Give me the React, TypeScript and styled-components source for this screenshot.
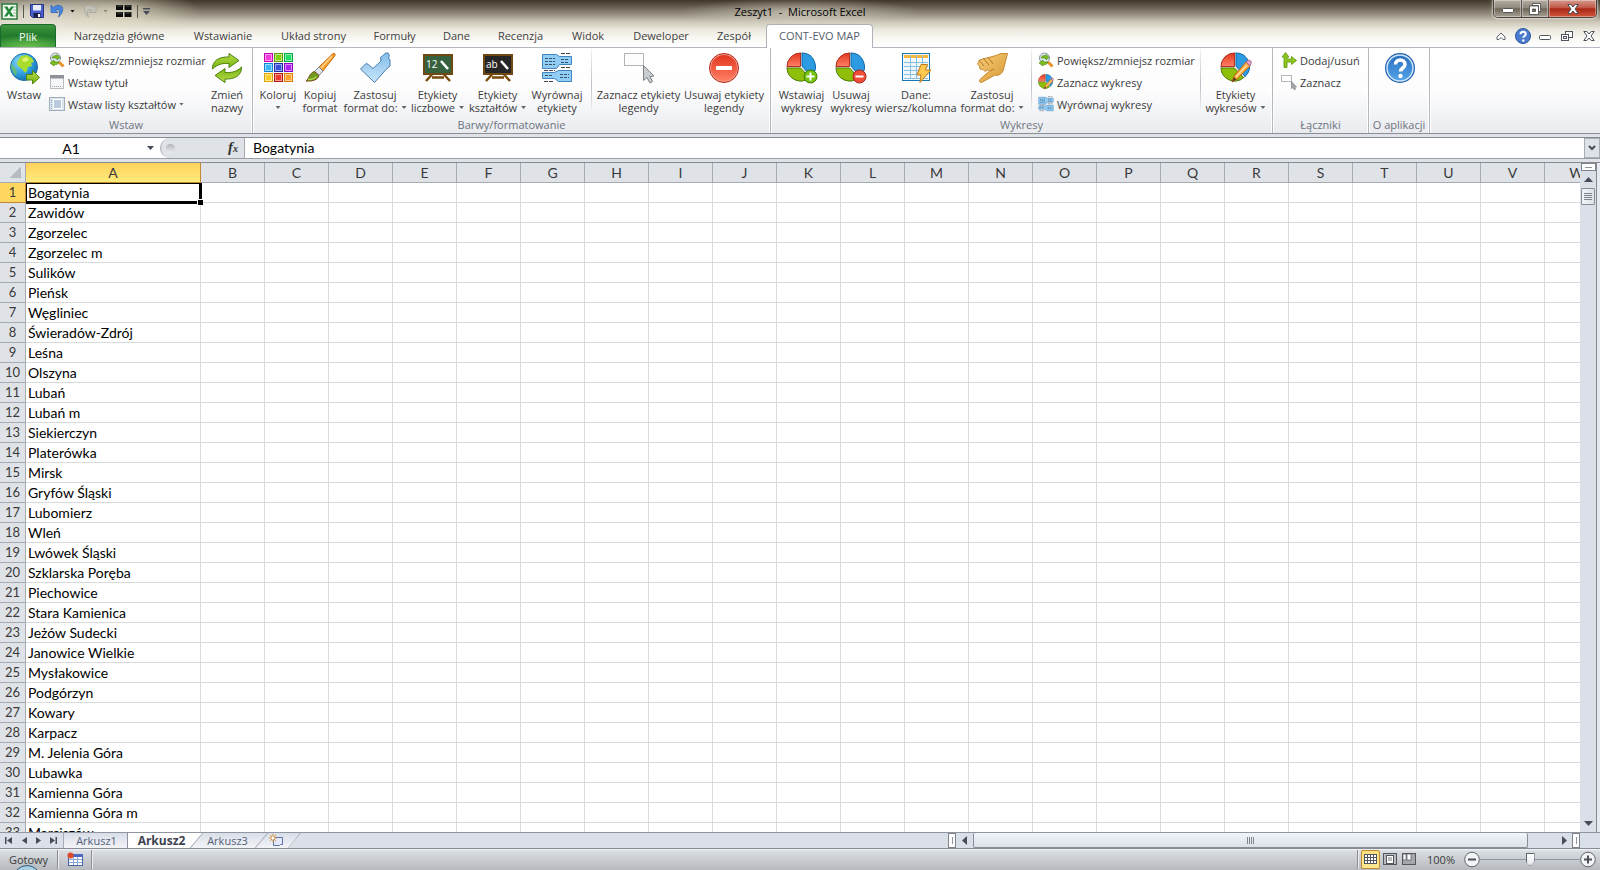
import React from 'react';
import styled, { createGlobalStyle, css } from 'styled-components';

const UI = '"Open Sans", "Noto Sans", sans-serif';
const CELL = 'Lato, "Open Sans", sans-serif';

const GlobalStyle = createGlobalStyle`
  *, *::before, *::after { box-sizing: border-box; }
  body { margin: 0; font-family: ${UI}; font-size: 11px; color: #3b3b3b; overflow: hidden; }
  button, input { font: inherit; color: inherit; margin: 0; padding: 0; border: 0; background: none; }
  svg { display: block; flex: none; }
`;

/* ---------- frame ---------- */

const Window = styled.div`
  display: flex;
  flex-direction: column;
  height: 100vh;
  background: #dfe3e9;
`;

const Glass = styled.header`
  flex: none;
  background:
    radial-gradient(ellipse 80px 24px at 120px 12px, rgba(236, 230, 208, 0.7), rgba(236, 230, 208, 0)),
    radial-gradient(ellipse 120px 34px at 30px 14px, rgba(240, 236, 222, 0.8), rgba(240, 236, 222, 0)),
    radial-gradient(ellipse 120px 14px at 50% 12px, rgba(225, 221, 208, 0.6), rgba(225, 221, 208, 0)),
    linear-gradient(#40382b 0, #5b5345 5px, #8d8677 13px, #cdc8b9 22px, #ece9df 30px, #f8f7f2 38px, #ffffff 47px);
`;

const TitleBar = styled.div`
  display: grid;
  grid-template-columns: 1fr auto 1fr;
  height: 24px;
`;

const QuickAccess = styled.div`
  display: flex;
  align-items: center;
  gap: 5px;
  padding-left: 1px;
  height: 22px;
`;

const IconButton = styled.button`
  display: flex;
  align-items: center;
  justify-content: center;
`;

const MenuIconButton = styled(IconButton)`
  gap: 6px;
  padding-right: 3px;
`;

const BarDivider = styled.span`
  width: 1px;
  height: 13px;
  background: #5b5850;
`;

const Title = styled.h1`
  margin: 0;
  font-size: 11px;
  font-weight: 400;
  line-height: 24px;
  color: #000;
  white-space: pre;
`;

const WindowButtons = styled.div`
  display: flex;
  justify-self: end;
  height: 18px;
  margin-right: 3px;
  border: 1px solid #4b423b;
  border-top: 0;
  border-radius: 0 0 5px 5px;
  overflow: hidden;
  box-shadow: 0 0 2px 1px rgba(255, 255, 255, 0.6);
`;

const WindowButton = styled.button<{ $w: number; $close?: boolean }>`
  display: flex;
  align-items: center;
  justify-content: center;
  width: ${(p) => p.$w}px;
  border-right: 1px solid #5d554d;
  box-shadow: inset 0 0 0 1px rgba(255, 255, 255, 0.35);
  background: linear-gradient(#b5aea3, #8f887c 45%, #6d6558 52%, #a8a297);
  ${(p) => p.$close && css`
    border-right: 0;
    background: linear-gradient(#d49a8c, #c25847 45%, #a82615 52%, #d2583b);
  `}
`;

const TabRow = styled.nav`
  display: flex;
  align-items: stretch;
  height: 24px;
  border-bottom: 1px solid #b4b8be;
`;

const FileTab = styled.button`
  width: 56px;
  margin-right: 3px;
  border: 1px solid #1d6b2c;
  border-bottom: 0;
  border-radius: 4px 4px 0 0;
  color: #fff;
  background: radial-gradient(ellipse 40px 12px at 50% 100%, #6dc04d, rgba(80, 170, 60, 0)), linear-gradient(#41963f, #217a2c 50%, #2f9238);
`;

const RibbonTab = styled.button<{ $w: number; $active?: boolean }>`
  width: ${(p) => p.$w}px;
  white-space: nowrap;
  color: #3f3f3f;
  ${(p) => p.$active && css`
    height: 24px;
    margin-left: 1px;
    padding-bottom: 2px;
    color: #565f6d;
    background: #fff;
    border: 1px solid #aeb2b8;
    border-bottom: 0;
    border-radius: 4px 4px 0 0;
  `}
`;

const TabTools = styled.div`
  display: flex;
  align-items: center;
  margin-left: auto;
`;

const ToolButton = styled(IconButton)`
  width: 22px;
  height: 24px;
`;

/* ---------- ribbon ---------- */

const Ribbon = styled.div`
  flex: none;
  display: flex;
  height: 86px;
  border-bottom: 1px solid #8b9097;
  background: linear-gradient(#ffffff, #fdfdfe 50%, #e9ebef);
`;

const Group = styled.section<{ $w: number }>`
  display: flex;
  flex-direction: column;
  flex: none;
  width: ${(p) => p.$w}px;
  border-right: 1px solid #b3b7be;
  box-shadow: inset -1px 0 #fff, 1px 0 #fff;
`;

const GroupBody = styled.div`
  display: flex;
  height: 70px;
  padding: 1px 2px 0;
`;

const GroupLabel = styled.h2`
  margin: 0;
  font-size: 11px;
  font-weight: 400;
  line-height: 14px;
  text-align: center;
  white-space: nowrap;
  color: #6d7480;
`;

const BigButton = styled.button<{ $w: number }>`
  display: flex;
  flex-direction: column;
  align-items: center;
  flex: none;
  width: ${(p) => p.$w}px;
  height: 66px;
  padding-top: 3px;
  line-height: 13px;
  white-space: nowrap;
`;

const BigCaption = styled.span`
  display: flex;
  align-items: center;
  gap: 4px;
  height: 13px;
  &:first-of-type { margin-top: 4px; }
`;

const SmallColumn = styled.div<{ $w: number; $pad: number }>`
  display: flex;
  flex-direction: column;
  flex: none;
  width: ${(p) => p.$w}px;
  padding-left: ${(p) => p.$pad}px;
`;

const SmallButton = styled.button`
  display: flex;
  align-items: center;
  gap: 3px;
  height: 22px;
  white-space: nowrap;
`;

const Separator = styled.span<{ $w: number }>`
  flex: none;
  width: ${(p) => p.$w}px;
  height: 62px;
  background: linear-gradient(#f2f3f5, #b9bdc6 60%, #f2f3f5) center / 1px 100% no-repeat;
`;

const Gap = styled.span`
  flex: none;
  width: 2px;
`;

const Caret = styled.i<{ $color?: string }>`
  flex: none;
  width: 5px;
  height: 3px;
  background: ${(p) => p.$color || '#63666b'};
  clip-path: polygon(0 0, 100% 0, 50% 100%);
`;

/* ---------- formula bar ---------- */

const FormulaBar = styled.div`
  flex: none;
  display: flex;
  height: 22px;
  margin-top: 3px;
  border-top: 1px solid #868b92;
  border-bottom: 1px solid #9a9fa6;
  background: #fff;
  font-family: ${CELL};
  color: #000;
`;

const NameBox = styled.label`
  display: flex;
  align-items: center;
  width: 160px;
  padding-right: 6px;
  input { width: 100%; min-width: 0; padding-right: 5px; text-align: center; font-size: 14px; outline: 0; }
`;

const FormulaTools = styled.div`
  display: flex;
  align-items: center;
  justify-content: space-between;
  width: 85px;
  padding: 0 6px 0 5px;
  border: 1px solid #a9adb3;
  border-width: 0 1px 0 1px;
  border-radius: 10px 0 0 10px;
  background: #dfe3e8;
`;

const Knob = styled.span`
  width: 9px;
  height: 9px;
  border-radius: 50%;
  background: linear-gradient(#b0b4ba, #eceef1);
`;

const FxButton = styled.button`
  font: italic bold 15px/16px "Liberation Serif", serif;
  color: #333;
  small { font-size: 10px; }
`;

const FormulaInput = styled.input`
  && {
    flex: 1;
    min-width: 0;
    padding: 0 0 1px 8px;
    font-size: 14px;
    outline: 0;
  }
`;

const ExpandButton = styled(IconButton)`
  width: 16px;
  border: 1px solid #a9adb3;
  background: #dfe3e8;
`;

/* ---------- grid ---------- */

const Sheet = styled.main`
  flex: 1;
  display: flex;
  min-height: 0;
  margin-top: 3px;
  border-top: 1px solid #868b92;
`;

const GridView = styled.div`
  flex: 1;
  min-width: 0;
  overflow: hidden;
  background: #fff;
`;

const Grid = styled.table`
  table-layout: fixed;
  width: 1609px;
  border-collapse: separate;
  border-spacing: 0;
  font-family: ${CELL};
  font-size: 14px;
  line-height: 19px;
  color: #000;
`;

const HeadCell = styled.th<{ $on?: boolean }>`
  height: 20px;
  padding: 0;
  font-weight: 400;
  color: #3a3a3a;
  border-right: 1px solid #a6abb1;
  border-bottom: 1px solid #a6abb1;
  background: #dfe3e8;
  ${(p) => p.$on && css`
    border-color: #c08a35;
    background: linear-gradient(#ffd05c, #ffec7c);
  `}
`;

const RowHead = styled(HeadCell)`
  font-size: 13px;
  ${(p) => p.$on && css`background: #ffd65f;`}
`;

const Corner = styled(HeadCell)`
  background: linear-gradient(135deg, transparent 50%, #b6bbc1 50%) 10px 4px / 11px 11px no-repeat, #dfe3e8;
`;

const Cell = styled.td<{ $on?: boolean }>`
  height: 20px;
  padding: 0 0 0 2px;
  border-right: 1px solid #d9dadb;
  border-bottom: 1px solid #d9dadb;
  white-space: nowrap;
  ${(p) => p.$on && css`
    position: relative;
    &::before {
      content: '';
      position: absolute;
      inset: 0 -2px -2px 0;
      border: solid #000;
      border-width: 1px 3px 3px 1px;
    }
    &::after {
      content: '';
      position: absolute;
      right: -3px;
      bottom: -3px;
      width: 6px;
      height: 6px;
      background: #000;
      border: solid #fff;
      border-width: 1px 0 0 1px;
    }
  `}
`;

const VScroll = styled.div`
  flex: none;
  display: flex;
  flex-direction: column;
  align-items: center;
  width: 16px;
  background: #dbe0e8;
`;

const EdgeStrip = styled.div`
  flex: none;
  width: 4px;
  border-left: 1px solid #868b92;
  background: #e6e9f0;
`;

const SplitBox = styled.span<{ $vertical?: boolean }>`
  flex: none;
  width: ${(p) => (p.$vertical ? 8 : 15)}px;
  height: ${(p) => (p.$vertical ? 15 : 8)}px;
  border: 1px solid #7f848b;
  background: linear-gradient(#8f949b, #8f949b) center / ${(p) => (p.$vertical ? '1px 7px' : '7px 1px')} no-repeat, #fff;
`;

const ArrowButton = styled(IconButton)<{ $w: number; $h: number }>`
  flex: none;
  width: ${(p) => p.$w}px;
  height: ${(p) => p.$h}px;
`;

const VThumb = styled.div`
  flex: none;
  width: 14px;
  height: 17px;
  border: 1px solid #868d98;
  border-radius: 1px;
  background: repeating-linear-gradient(#7f858e 0 1px, transparent 1px 2px) center / 8px 8px no-repeat, linear-gradient(90deg, #f3f5f8, #dde1e8);
`;

const Spacer = styled.span`
  flex: 1;
`;

/* ---------- bottom bars ---------- */

const BottomRow = styled.div`
  flex: none;
  display: flex;
  height: 17px;
  border-top: 1px solid #8f96a1;
  border-bottom: 1px solid #868d98;
  background: #dbe0e8;
`;

const SheetNav = styled.div`
  display: flex;
  align-items: center;
  width: 63px;
`;

const SheetTab = styled.button<{ $w: number; $kind?: 'first' | 'active' | 'slanted' }>`
  position: relative;
  width: ${(p) => p.$w}px;
  height: 15px;
  line-height: 15px;
  color: #56617a;
  background: linear-gradient(#d9dee7, #f2f4f8);
  ${(p) => p.$kind === 'first' && css`
    border-left: 1px solid #a6adb8;
    border-right: 1px solid #8b93a0;
    padding-left: 2px;
  `}
  ${(p) => p.$kind === 'active' && css`
    font-size: 12px !important;
    font-weight: 700 !important;
    color: #3d4350;
    background: #fff;
    padding-right: 8px;
    clip-path: polygon(0 0, 100% 0, calc(100% - 13px) 100%, 0 100%);
  `}
  ${(p) => p.$kind === 'slanted' && css`
    margin-left: -13px;
    padding-right: 3px;
    clip-path: polygon(13px 0, 100% 0, calc(100% - 13px) 100%, 0 100%);
    &::before {
      content: '';
      position: absolute;
      left: 6px;
      top: 0;
      width: 1px;
      height: 15px;
      background: #8b93a0;
      transform: skewX(-40deg);
    }
  `}
  &::after {
    content: '';
    position: absolute;
    display: ${(p) => (p.$kind === 'first' ? 'none' : 'block')};
    right: 6px;
    top: 0;
    width: 1px;
    height: 15px;
    background: #8b93a0;
    transform: skewX(-40deg);
  }
  svg { margin: 0 auto; }
`;

const HScroll = styled.div`
  display: flex;
  align-items: center;
  width: 632px;
  margin: 0 20px 0 auto;
`;

const HThumb = styled.div`
  flex: 1;
  height: 15px;
  margin-right: 28px;
  border: 1px solid #868d98;
  border-top: 0;
  border-radius: 2px;
  background: repeating-linear-gradient(90deg, #7f858e 0 1px, transparent 1px 2px) center / 7px 7px no-repeat, linear-gradient(#f1f4f9, #dde1e8);
`;

const StatusBar = styled.footer`
  flex: none;
  display: flex;
  align-items: center;
  height: 21px;
  padding-right: 4px;
  position: relative;
  overflow: hidden;
  background: linear-gradient(#f4f5f8 0, #d9dce1 2px, #b6babe);
`;

const StatusDivider = styled.span`
  width: 2px;
  height: 19px;
  border-left: 1px solid #8b8f95;
  background: #eceef1;
`;

const StatusText = styled.span<{ $w: number }>`
  width: ${(p) => p.$w}px;
  text-align: center;
`;

const Orb = styled.span`
  position: absolute;
  left: 13px;
  top: 16px;
  width: 28px;
  height: 28px;
  border: 1px solid #2c5d78;
  border-radius: 50%;
  background: #a9cfe2;
`;

const ViewButtons = styled.div`
  display: flex;
  padding-left: 2px;
`;

const ViewButton = styled(IconButton)<{ $on?: boolean }>`
  width: 19px;
  height: 19px;
  ${(p) => p.$on && css`
    border: 1px solid #c28c30;
    border-radius: 2px;
    background: linear-gradient(#ffdf7d, #ffe894);
  `}
`;

const ZoomRange = styled.input`
  appearance: none;
  width: 100px;
  height: 17px;
  background: linear-gradient(#8b97a5, #8b97a5) center / 100% 1px no-repeat;
  &::-webkit-slider-thumb {
    appearance: none;
    width: 9px;
    height: 13px;
    background: linear-gradient(#fff, #e3e6ea) center / 7px 11px no-repeat, #5f656d;
    clip-path: polygon(0 0, 100% 0, 100% 65%, 50% 100%, 0 65%);
  }
`;

/* ---------- icons ---------- */

const HiddenSvg = styled.svg`
  position: absolute;
  width: 0;
  height: 0;
`;

const Defs = () => (
  <HiddenSvg aria-hidden="true">
    <defs>
      <linearGradient id="green" x1="0" y1="0" x2="0" y2="1"><stop offset="0" stopColor="#b9dc4a" /><stop offset="1" stopColor="#74b30f" /></linearGradient>
      <linearGradient id="red" x1="0" y1="0" x2="0" y2="1"><stop offset="0" stopColor="#e2361e" /><stop offset="1" stopColor="#ff8065" /></linearGradient>
      <linearGradient id="blue" x1="0" y1="0" x2="0" y2="1"><stop offset="0" stopColor="#2a6fc0" /><stop offset="1" stopColor="#54a5e8" /></linearGradient>
      <linearGradient id="sky" x1="0" y1="0" x2="0" y2="1"><stop offset="0" stopColor="#84bdea" /><stop offset="1" stopColor="#c9e6fa" /></linearGradient>
      <linearGradient id="hand" x1="0" y1="0" x2="1" y2="1"><stop offset="0" stopColor="#f6cf7e" /><stop offset="1" stopColor="#d9962f" /></linearGradient>
      <radialGradient id="globe" cx=".35" cy=".3" r=".8"><stop offset="0" stopColor="#8fd9fb" /><stop offset=".55" stopColor="#2f9fe0" /><stop offset="1" stopColor="#14639f" /></radialGradient>
    </defs>
  </HiddenSvg>
);

type IconProps = { size?: number; children?: React.ReactNode };
const I32 = ({ size = 32, children }: IconProps) => (
  <svg width={size} height={size} viewBox="0 0 32 32" aria-hidden="true">{children}</svg>
);

const GlobeIcon = () => (
  <I32>
    <circle cx="16" cy="15" r="13.5" fill="url(#globe)" stroke="#1d6fa5" />
    <path d="M13 4l6-1 5 3 2 4-3 1 1 3-4 1-1 4-2 2-3-4-4-3-1-4z" fill="#a9dd2f" />
    <path d="M15 6l4-1 2 3-4 2-3-1z" fill="#dff36c" />
    <path d="M3 12l4 3 2 5-1 4c-3-2-5-7-5-12z" fill="#7ac943" opacity=".6" />
    <path d="M18.500 22.500h6v-4l7 7-7 6.500v-4h-6z" fill="url(#green)" stroke="#4f860c" />
  </I32>
);

const SwapIcon = () => {
  const arrow = 'M1.500 17C1 9 8 4.500 18 5V1.500L28 8.500 18 15.500V11.500C11 11 6 12.500 1.500 17z';
  return (
    <I32>
      <path d={arrow} fill="url(#green)" stroke="#4c820c" />
      <path d={arrow} fill="url(#green)" stroke="#4c820c" transform="rotate(180 16 16)" />
    </I32>
  );
};

const PALETTE = [
  ['#f53bdc', '#c800b4'], ['#84cf0c', '#5d9e00'], ['#21dd68', '#00a845'],
  ['#3cb7fb', '#1287d6'], ['#3a4fdc', '#1f2fa6'], ['#b022f2', '#8500c4'],
  ['#ffcf2b', '#d9a300'], ['#ea3b30', '#b51a10'], ['#ffa12b', '#dd7a00'],
];
const ColorsIcon = () => (
  <I32>
    {PALETTE.map(([fill, stroke], i) => {
      const x = 2 + (i % 3) * 10 + 0.5;
      const y = 1 + Math.floor(i / 3) * 10 + 0.5;
      return (
        <g key={stroke}>
          <rect x={x} y={y} width="8" height="8" fill={fill} stroke={stroke} />
          <rect x={x + 1} y={y + 1} width="6" height="6" fill="none" stroke="#fff" strokeOpacity=".5" />
        </g>
      );
    })}
  </I32>
);

const BrushIcon = () => (
  <I32>
    <path d="M29 1.500c1.500-.5 2.500.5 2 2L19 19l-4-4z" fill="#f9a12e" stroke="#c96a10" />
    <path d="M28 4L17 16" stroke="#ffd38c" strokeWidth="1.500" />
    <path d="M15 15l4 4-4 4.500-4.500-4z" fill="#dfe5ea" stroke="#7c868f" />
    <path d="M10.500 19.500l4.500 4c-1 4-6 6-13 5.500 3-1.500 3-8 8.500-9.500z" fill="#6f9a1f" stroke="#7a4a12" />
    <path d="M4 27.500c4 0 7-1 8-3" stroke="#b7dd4b" strokeWidth="1.500" fill="none" />
  </I32>
);

const CheckIcon = () => (
  <I32>
    <path d="M1.500 17l5.500-5.500 2.500 1 4.500 4 8-7.500-.5-3.500 5.500-4.500h2l1.500 2.500-1 2.500 1.500 2v6l-4 3.500L15.500 30.500z" fill="url(#sky)" stroke="#4a7cae" />
  </I32>
);

const BoardIcon = ({ text, fill }: { text: string; fill: string }) => (
  <I32>
    <path d="M10 22.500L4 29M22 22.500l6 6.500M10 25.500h12" stroke="#7a4a08" strokeWidth="2.500" fill="none" />
    <rect x="2" y="3" width="28" height="19" fill={fill} stroke="#6e4a12" strokeWidth="2" />
    <text x="4" y="16" fontFamily="Open Sans" fontSize="10" fill="#fff">{text}</text>
    <path d="M19 9l7 8" stroke="#fff" strokeWidth="2.500" />
  </I32>
);

const AlignIcon = ({ size }: { size?: number }) => (
  <I32 size={size}>
    <path d="M1.500 2.500h14l3 2h12v8h-12l-3 4h-14z" fill="#92cdf5" stroke="#3f83bf" />
    <path d="M1.500 20.500h12l4-2h13v11h-13l-4-3h-12z" fill="#92cdf5" stroke="#3f83bf" />
    <path d="M4 6.500h10M4 9.500h10M4 12.500h10M20 7.500h8M20 10.500h8M4 23.500h8M19 22.500h9M19 25.500h9" stroke="#36526b" strokeDasharray="3 1" fill="none" />
    <path d="M20 1.500h9M20 15.500h9M3 18.500h11M3 29.500h10" stroke="#444" strokeDasharray="4 1" fill="none" />
  </I32>
);

const SelectIcon = () => (
  <I32>
    <rect x="1.500" y="1.500" width="19" height="12" fill="#fdfdfd" stroke="#6b6b6b" strokeDasharray="1 1" />
    <path d="M20.500 13.500v15l3.500-3 3 5.500 2.500-1.500-2.500-5 4-.5z" fill="#c9ccd0" stroke="#7c8086" />
  </I32>
);

const RemoveIcon = () => (
  <I32>
    <circle cx="16" cy="16" r="14.500" fill="#f6a08f" stroke="#b2261a" />
    <circle cx="16" cy="16" r="13" fill="url(#red)" />
    <rect x="8" y="14" width="16" height="4" rx="1" fill="#fff" />
  </I32>
);

const Pie = () => (
  <>
    <circle cx="15" cy="15" r="14" fill="#e9edf0" stroke="#5d6a70" strokeWidth=".6" />
    <path d="M14.500 14.500V1A13.500 13.500 0 0 0 1 14.500z" fill="url(#red)" stroke="#b63021" />
    <path d="M16 14V1A13.500 13.500 0 0 1 25 24.500z" fill="#2c9be2" stroke="#1369a8" />
    <path d="M14.500 16H1A13.500 13.500 0 0 0 23.500 25.500z" fill="#8fbf08" stroke="#54800a" />
  </>
);

const PieIcon = ({ badge, size }: { badge: 'plus' | 'minus' | 'pencil'; size?: number }) => (
  <I32 size={size}>
    <Pie />
    {badge === 'pencil' ? (
      <g>
        <path d="M12 30l2-6L26 10l4 4-13 13z" fill="#f8a83c" stroke="#b86a18" />
        <path d="M26 10l2-1.500c2-1 4 1 3 3L30 14z" fill="#e8a3c4" stroke="#a5628a" />
        <path d="M12 30l2-5 2.500 2.500z" fill="#5b3a1a" />
        <path d="M16 25l11-12" stroke="#ffe0a8" strokeWidth="1.500" />
      </g>
    ) : (
      <g>
        <circle cx="24.500" cy="24.500" r="6.500" fill={badge === 'plus' ? '#76c210' : '#ee4d3a'} stroke={badge === 'plus' ? '#3f7d06' : '#a82519'} />
        <path d="M20.500 24.500h8" stroke="#fff" strokeWidth="2" />
        {badge === 'plus' && <path d="M24.500 20.500v8" stroke="#fff" strokeWidth="2" />}
      </g>
    )}
  </I32>
);

const DataIcon = () => (
  <I32>
    <rect x="2.500" y="1.500" width="27" height="27" fill="#eff8fe" stroke="#1478b4" />
    <rect x="4" y="3" width="24" height="3" fill="#f8b93a" />
    <path d="M4 10.500h24M4 14.500h24M4 18.500h24M4 22.500h24M4 26.500h24M10.500 3v24M16.500 3v24M22.500 3v24" stroke="#8abfe0" fill="none" />
    <path d="M21 12.500h6.500l-2 5.500H31L20 30.500l1-7.500h-4z" fill="#fcc850" stroke="#c07a18" />
  </I32>
);

const HandIcon = () => (
  <I32>
    <path d="M20 3.500L25 1.500h6.500L27 19c-2 4-6 5-8 4L6.500 30c-3 1.500-4-1.500-2-3l9-8-1.500-1.500-3 2-2-2-3-.5-.5-3L1.500 12l2-4z" fill="url(#hand)" stroke="#c98a30" />
    <path d="M3 8l5 6M7 6l6 7M12 5l5 7M14 19l4-2" stroke="#b37722" fill="none" />
  </I32>
);

const HelpIcon = ({ size }: { size?: number }) => (
  <I32 size={size}>
    <circle cx="16" cy="16" r="15" fill="#1f5fae" />
    <circle cx="16" cy="16" r="13" fill="url(#blue)" stroke="#cfe6fa" strokeWidth="1.500" />
    <path d="M11.500 12.500c0-6 9.500-6 9.500 0 0 3.500-4.500 3.500-4.500 7" fill="none" stroke="#fff" strokeWidth="3.500" />
    <circle cx="16.500" cy="24" r="2.200" fill="#fff" />
  </I32>
);

const SmallHelpIcon = () => (
  <I32 size={16}>
    <circle cx="16" cy="16" r="15" fill="#4a7bcc" stroke="#2c57a4" strokeWidth="2" />
    <path d="M11 12.500c0-7 10.500-7 10.500 0 0 3.500-5 3.500-5 7" fill="none" stroke="#fff" strokeWidth="4" />
    <circle cx="16.500" cy="25" r="2.500" fill="#fff" />
  </I32>
);

const I16 = ({ children }: IconProps) => (
  <svg width="16" height="16" viewBox="0 0 16 16" aria-hidden="true">{children}</svg>
);

const ResizeIcon = () => (
  <I16>
    <circle cx="6.500" cy="6" r="5" fill="#dcebf7" stroke="#8a949e" />
    <path d="M10 10l4.500 4.500" stroke="#e8932a" strokeWidth="3" />
    <path d="M3 6c1-3 4-3 5-2V2.500l3 3-3 2.500V6.500C6 6 4 6 3 6z" fill="#7bbd1e" stroke="#4c820c" strokeWidth=".6" />
    <path d="M10 10c-1 3-4 3-5 2.500V14l-4-3 4-3v1.500c2 .5 4 .5 5 .5z" fill="#7bbd1e" stroke="#4c820c" strokeWidth=".6" />
  </I16>
);

const TitleIcon = () => (
  <I16>
    <rect x="1.500" y="1.500" width="13" height="13" fill="#f6f7f8" stroke="#b9bdc2" />
    <rect x="1" y="1" width="14" height="3.500" fill="#8d9299" />
    <path d="M3 12.500h10" stroke="#9a9ea4" strokeDasharray="1 1" />
  </I16>
);

const ListIcon = () => (
  <I16>
    <rect x=".5" y="1.500" width="15" height="13" fill="#dbe7f2" stroke="#a3adb8" />
    <rect x="4.500" y="3.500" width="8" height="9" fill="#b8cadb" stroke="#fff" />
    <path d="M2.500 4v9" stroke="#8fa3b5" strokeDasharray="1 1" />
  </I16>
);

const ConnectorIcon = () => (
  <I16>
    <path d="M3 15.500V5H1l3.500-4.500L8 5H6v2h4.500V4.500l5 4-5 4V10H6v5.500z" fill="#8cc820" stroke="#5c9410" strokeWidth=".8" />
  </I16>
);

const PickIcon = () => (
  <I16>
    <rect x=".5" y="1.500" width="10" height="6" fill="#fff" stroke="#b3b6ba" />
    <path d="M10.500 7.500v7l1.500-1 1.500 2.500 1-1-1-2h2z" fill="#a5a9ae" stroke="#85898e" strokeWidth=".8" />
  </I16>
);

const ExcelIcon = () => (
  <svg width="17" height="17" viewBox="0 0 17 17" aria-hidden="true">
    <rect x="1" y="1" width="15" height="15" fill="#f3faf2" stroke="#2c7a3a" strokeWidth="1.500" />
    <path d="M12 4h3M12 7h3M12 10h3M12 13h3" stroke="#8fbf92" />
    <path d="M3 3.500h3.500l1.500 3 2-3h3L9.500 8.500l3.500 5H9.500L8 10.500l-2 3H3l3.500-5z" fill="#23873a" />
  </svg>
);

const SaveIcon = () => (
  <I16>
    <path d="M1.500 1.500h13v13h-11l-2-2z" fill="#4a5fd0" stroke="#26337f" />
    <rect x="4" y="2" width="8" height="5.500" fill="#e9eefb" />
    <rect x="4.500" y="10" width="7" height="4.500" fill="#1b2244" />
    <rect x="9" y="11" width="2" height="3" fill="#fff" />
  </I16>
);

const UndoIcon = ({ faded }: { faded?: boolean }) => (
  <svg width="14" height="16" viewBox="0 0 14 16" aria-hidden="true">
    <g transform={faded ? 'matrix(-1 0 0 1 14 0)' : undefined}>
      <path d="M1 2v7.500h7L5.500 7c3-2 5.500 1 3 7 5-4 6-11 1-11.500C7 2 5 3 3.500 4.500z" fill={faded ? '#c3c1ba' : '#4a86dd'} stroke={faded ? '#a3a098' : '#2d5fb4'} strokeWidth=".7" />
    </g>
  </svg>
);

const WindowsIcon = () => (
  <svg width="16" height="13" viewBox="0 0 16 13" aria-hidden="true">
    <path d="M0 0h7v5H0zM8.500 0h7v5h-7zM0 7h7v5H0zM8.500 7h7v5h-7z" fill="#0c0c0c" />
    <path d="M1 1h5M9.500 1h5M1 8h5M9.500 8h5" stroke="#777" strokeWidth=".6" />
  </svg>
);

const MinGlyph = ({ c = '#fff' }: { c?: string }) => (
  <svg width="12" height="12" viewBox="0 0 12 12"><rect x=".5" y="5.500" width="11" height="4" rx="1" fill="#fff" stroke={c} /></svg>
);

const MaxGlyph = () => (
  <svg width="12" height="12" viewBox="0 0 12 12">
    <path d="M3.500 .5h8v8h-2v-6h-6z" fill="#fff" stroke="#444" strokeWidth=".8" />
    <path d="M.5 3h9v8.500h-9zM3.500 6v2.500h3V6z" fill="#fff" fillRule="evenodd" stroke="#444" strokeWidth=".8" />
  </svg>
);

const RestoreGlyph = () => (
  <svg width="12" height="12" viewBox="0 0 12 12">
    <rect x="4.500" y="1.500" width="7" height="6" fill="#fff" stroke="#50565e" />
    <rect x=".5" y="4.500" width="7" height="6" fill="#fff" stroke="#50565e" />
    <rect x="2.500" y="6.500" width="3" height="2" fill="#fff" stroke="#50565e" />
  </svg>
);

const CloseGlyph = () => (
  <svg width="12" height="12" viewBox="0 0 12 12">
    <path d="M.8 1.500h3L6 4l2.200-2.500h3L8 6l3.200 4.500h-3L6 8l-2.200 2.500h-3L4 6z" fill="#fff" stroke="#474d56" />
  </svg>
);

const CaretUp = () => (
  <svg width="10" height="10" viewBox="0 0 10 10"><path d="M1 6l4-4 4 4v2.500H7L5 6.500 3 8.500H1z" fill="#fff" stroke="#5b6068" /></svg>
);

const Triangle = ({ d, w = 9, h = 9 }: { d: string; w?: number; h?: number }) => (
  <svg width={w} height={h} viewBox={`0 0 ${w} ${h}`}><path d={d} fill="#474d57" /></svg>
);

const NewSheetIcon = () => (
  <svg width="15" height="13" viewBox="0 0 15 13">
    <path d="M4.500 3.500h9v7h-2l-1 1h-6z" fill="#e2e9f8" stroke="#5f72a8" />
    <path d="M4 0v8M0 4h8M1.200 1.200l5.600 5.600M6.800 1.200L1.200 6.800" stroke="#d9862a" />
    <circle cx="4" cy="4" r="1.500" fill="#fff" />
  </svg>
);

const MacroIcon = () => (
  <svg width="16" height="15" viewBox="0 0 16 15">
    <rect x="1.500" y="2.500" width="14" height="11" fill="#fff" stroke="#4a62a8" />
    <rect x="1" y="2" width="15" height="3" fill="#4a68c0" />
    <path d="M2 7.500h13M2 10.500h13M6.500 5v8M10.500 5v8" stroke="#8fa6d8" fill="none" />
    <circle cx="3.500" cy="3.500" r="3" fill="#dd4a2c" />
  </svg>
);

const NormalView = () => (
  <svg width="13" height="11" viewBox="0 0 13 11"><rect x=".5" y=".5" width="12" height="9" fill="#fff" stroke="#53575d" /><path d="M0 3.500h13M0 6.500h13M3.500 0v10M6.500 0v10M9.500 0v10" stroke="#53575d" /></svg>
);
const PageView = () => (
  <svg width="14" height="13" viewBox="0 0 14 13"><rect x=".5" y=".5" width="13" height="11" fill="#b9bdc2" stroke="#53575d" /><rect x="3.500" y="2.500" width="7" height="8" fill="#fff" stroke="#53575d" /><path d="M5 5h4M5 7h4" stroke="#777" /></svg>
);
const BreakView = () => (
  <svg width="14" height="13" viewBox="0 0 14 13"><rect x=".5" y=".5" width="13" height="11" fill="#a4a8ad" stroke="#53575d" /><path d="M1 1h3v6H1zM5 1h4v6H5z" fill="#fff" stroke="#53575d" strokeWidth=".7" /></svg>
);
const ZoomGlyph = ({ plus }: { plus?: boolean }) => (
  <svg width="16" height="17" viewBox="0 0 16 17">
    <circle cx="8" cy="8.500" r="7.300" fill="#f1f3f5" stroke="#5f656d" />
    <path d={plus ? 'M4 8.500h8M8 4.500v8' : 'M4 8.500h8'} stroke="#4d5259" strokeWidth="2" />
  </svg>
);

/* ---------- content ---------- */

const TABS: [string, number][] = [
  ['Narzędzia główne', 120], ['Wstawianie', 88], ['Układ strony', 93], ['Formuły', 69], ['Dane', 55],
  ['Recenzja', 73], ['Widok', 62], ['Deweloper', 84], ['Zespół', 62],
];

const NAMES = [
  'Bogatynia', 'Zawidów', 'Zgorzelec', 'Zgorzelec m', 'Sulików', 'Pieńsk', 'Węgliniec', 'Świeradów-Zdrój', 'Leśna',
  'Olszyna', 'Lubań', 'Lubań m', 'Siekierczyn', 'Platerówka', 'Mirsk', 'Gryfów Śląski', 'Lubomierz', 'Wleń',
  'Lwówek Śląski', 'Szklarska Poręba', 'Piechowice', 'Stara Kamienica', 'Jeżów Sudecki', 'Janowice Wielkie',
  'Mysłakowice', 'Podgórzyn', 'Kowary', 'Karpacz', 'M. Jelenia Góra', 'Lubawka', 'Kamienna Góra',
  'Kamienna Góra m', 'Marciszów',
];

const COLUMNS = 'ABCDEFGHIJKLMNOPQRSTUVW'.split('');

type BigProps = { w: number; icon: React.ReactNode; top: string; bottom?: string; menu?: boolean };
const Big = ({ w, icon, top, bottom, menu }: BigProps) => (
  <BigButton $w={w}>
    {icon}
    <BigCaption>{top}</BigCaption>
    {(bottom || menu) && <BigCaption>{bottom}{menu && <Caret />}</BigCaption>}
  </BigButton>
);

const Small = ({ icon, text, menu }: { icon: React.ReactNode; text: string; menu?: boolean }) => (
  <SmallButton>{icon}<span>{text}</span>{menu && <Caret />}</SmallButton>
);

export default function App() {
  return (
    <Window>
      <GlobalStyle />
      <Defs />
      <Glass>
        <TitleBar>
          <QuickAccess>
            <ExcelIcon />
            <BarDivider />
            <IconButton aria-label="Zapisz"><SaveIcon /></IconButton>
            <MenuIconButton aria-label="Cofnij"><UndoIcon /><Caret $color="#111" /></MenuIconButton>
            <MenuIconButton aria-label="Powtórz"><UndoIcon faded /><Caret $color="#8b887f" /></MenuIconButton>
            <IconButton aria-label="Rozmieść okna"><WindowsIcon /></IconButton>
            <BarDivider />
            <IconButton aria-label="Dostosuj pasek">
              <Triangle w={7} h={7} d="M0 0h7v1.500H0zM0 3h7L3.500 7z" />
            </IconButton>
          </QuickAccess>
          <Title>{'Zeszyt1  -  Microsoft Excel'}</Title>
          <WindowButtons>
            <WindowButton $w={28} aria-label="Minimalizuj"><MinGlyph c="#555" /></WindowButton>
            <WindowButton $w={27} aria-label="Przywróć"><MaxGlyph /></WindowButton>
            <WindowButton $w={47} $close aria-label="Zamknij"><CloseGlyph /></WindowButton>
          </WindowButtons>
        </TitleBar>
        <TabRow>
          <FileTab>Plik</FileTab>
          {TABS.map(([name, w]) => <RibbonTab key={name} $w={w}>{name}</RibbonTab>)}
          <RibbonTab $w={107} $active>CONT-EVO MAP</RibbonTab>
          <TabTools>
            <ToolButton aria-label="Minimalizuj wstążkę"><CaretUp /></ToolButton>
            <ToolButton aria-label="Pomoc"><SmallHelpIcon /></ToolButton>
            <ToolButton aria-label="Minimalizuj okno"><MinGlyph c="#50565e" /></ToolButton>
            <ToolButton aria-label="Przywróć okno"><RestoreGlyph /></ToolButton>
            <ToolButton aria-label="Zamknij okno"><CloseGlyph /></ToolButton>
          </TabTools>
        </TabRow>
      </Glass>

      <Ribbon>
        <Group $w={253}>
          <GroupBody>
            <Big w={44} icon={<GlobeIcon />} top="Wstaw" />
            <SmallColumn $w={160} $pad={3}>
              <Small icon={<ResizeIcon />} text="Powiększ/zmniejsz rozmiar" />
              <Small icon={<TitleIcon />} text="Wstaw tytuł" />
              <Small icon={<ListIcon />} text="Wstaw listy kształtów" menu />
            </SmallColumn>
            <Big w={42} icon={<SwapIcon />} top="Zmień" bottom="nazwy" />
          </GroupBody>
          <GroupLabel>Wstaw</GroupLabel>
        </Group>
        <Group $w={518}>
          <GroupBody>
            <Gap />
            <Big w={42} icon={<ColorsIcon />} top="Koloruj" menu />
            <Big w={42} icon={<BrushIcon />} top="Kopiuj" bottom="format" />
            <Big w={68} icon={<CheckIcon />} top="Zastosuj" bottom="format do:" menu />
            <Big w={57} icon={<BoardIcon text="12" fill="#35613f" />} top="Etykiety" bottom="liczbowe" menu />
            <Big w={63} icon={<BoardIcon text="ab" fill="#262626" />} top="Etykiety" bottom="kształtów" menu />
            <Big w={56} icon={<AlignIcon />} top="Wyrównaj" bottom="etykiety" />
            <Separator $w={12} />
            <Big w={83} icon={<SelectIcon />} top="Zaznacz etykiety" bottom="legendy" />
            <Big w={88} icon={<RemoveIcon />} top="Usuwaj etykiety" bottom="legendy" />
          </GroupBody>
          <GroupLabel>Barwy/formatowanie</GroupLabel>
        </Group>
        <Group $w={502}>
          <GroupBody>
            <Gap />
            <Big w={53} icon={<PieIcon badge="plus" />} top="Wstawiaj" bottom="wykresy" />
            <Big w={46} icon={<PieIcon badge="minus" />} top="Usuwaj" bottom="wykresy" />
            <Big w={84} icon={<DataIcon />} top="Dane:" bottom="wiersz/kolumna" />
            <Big w={68} icon={<HandIcon />} top="Zastosuj" bottom="format do:" menu />
            <Separator $w={10} />
            <SmallColumn $w={160} $pad={2}>
              <Small icon={<ResizeIcon />} text="Powiększ/zmniejsz rozmiar" />
              <Small icon={<PieIcon badge="pencil" size={16} />} text="Zaznacz wykresy" />
              <Small icon={<AlignIcon size={16} />} text="Wyrównaj wykresy" />
            </SmallColumn>
            <Separator $w={8} />
            <Big w={63} icon={<PieIcon badge="pencil" />} top="Etykiety" bottom="wykresów" menu />
          </GroupBody>
          <GroupLabel>Wykresy</GroupLabel>
        </Group>
        <Group $w={96}>
          <GroupBody>
            <SmallColumn $w={92} $pad={6}>
              <Small icon={<ConnectorIcon />} text="Dodaj/usuń" />
              <Small icon={<PickIcon />} text="Zaznacz" />
            </SmallColumn>
          </GroupBody>
          <GroupLabel>Łączniki</GroupLabel>
        </Group>
        <Group $w={61}>
          <GroupBody>
            <BigButton $w={58} aria-label="O aplikacji"><HelpIcon /></BigButton>
          </GroupBody>
          <GroupLabel>O aplikacji</GroupLabel>
        </Group>
      </Ribbon>

      <FormulaBar>
        <NameBox>
          <input aria-label="Pole nazwy" defaultValue="A1" />
          <Triangle w={7} h={4} d="M0 0h7L3.500 4z" />
        </NameBox>
        <FormulaTools>
          <Knob />
          <FxButton aria-label="Wstaw funkcję">f<small>x</small></FxButton>
        </FormulaTools>
        <FormulaInput aria-label="Pasek formuły" defaultValue="Bogatynia" />
        <ExpandButton aria-label="Rozwiń pasek formuły">
          <svg width="8" height="6" viewBox="0 0 8 6"><path d="M1 1l3 3 3-3" stroke="#474d57" strokeWidth="2" fill="none" /></svg>
        </ExpandButton>
      </FormulaBar>

      <Sheet>
        <GridView>
          <Grid>
            <colgroup>
              <col width="26" />
              <col width="175" />
              {COLUMNS.slice(1).map((c) => <col key={c} width="64" />)}
            </colgroup>
            <thead>
              <tr>
                <Corner aria-label="Zaznacz wszystko" />
                {COLUMNS.map((c) => <HeadCell key={c} scope="col" $on={c === 'A'}>{c}</HeadCell>)}
              </tr>
            </thead>
            <tbody>
              {NAMES.map((name, r) => (
                <tr key={name}>
                  <RowHead scope="row" $on={r === 0}>{r + 1}</RowHead>
                  {COLUMNS.map((c, i) => <Cell key={c} $on={r === 0 && i === 0}>{i === 0 ? name : null}</Cell>)}
                </tr>
              ))}
            </tbody>
          </Grid>
        </GridView>
        <VScroll>
          <SplitBox />
          <ArrowButton $w={16} $h={17} aria-label="W górę"><Triangle h={5} d="M0 5h9L4.500 0z" /></ArrowButton>
          <VThumb />
          <Spacer />
          <ArrowButton $w={16} $h={17} aria-label="W dół"><Triangle h={5} d="M0 0h9L4.500 5z" /></ArrowButton>
        </VScroll>
        <EdgeStrip />
      </Sheet>

      <BottomRow>
        <SheetNav>
          <ArrowButton $w={17} $h={15} aria-label="Pierwszy arkusz"><Triangle w={7} h={7} d="M0 0h1.500v7H0zM7 0v7L2 3.500z" /></ArrowButton>
          <ArrowButton $w={14} $h={15} aria-label="Poprzedni arkusz"><Triangle w={5} h={7} d="M5 0v7L0 3.500z" /></ArrowButton>
          <ArrowButton $w={14} $h={15} aria-label="Następny arkusz"><Triangle w={5} h={7} d="M0 0v7l5-3.500z" /></ArrowButton>
          <ArrowButton $w={17} $h={15} aria-label="Ostatni arkusz"><Triangle w={7} h={7} d="M5.500 0H7v7H5.500zM0 0v7l5-3.500z" /></ArrowButton>
        </SheetNav>
        <SheetTab $w={65} $kind="first">Arkusz1</SheetTab>
        <SheetTab $w={75} $kind="active">Arkusz2</SheetTab>
        <SheetTab $w={78} $kind="slanted">Arkusz3</SheetTab>
        <SheetTab $w={46} $kind="slanted" aria-label="Wstaw arkusz"><NewSheetIcon /></SheetTab>
        <HScroll>
          <SplitBox $vertical />
          <ArrowButton $w={17} $h={15} aria-label="W lewo"><Triangle w={5} d="M5 0v9L0 4.500z" /></ArrowButton>
          <HThumb />
          <ArrowButton $w={16} $h={15} aria-label="W prawo"><Triangle w={5} d="M0 0v9l5-4.500z" /></ArrowButton>
          <SplitBox $vertical />
        </HScroll>
      </BottomRow>

      <StatusBar>
        <Orb />
        <StatusText $w={57}>Gotowy</StatusText>
        <StatusDivider />
        <ArrowButton $w={32} $h={19} aria-label="Zarejestruj makro"><MacroIcon /></ArrowButton>
        <StatusDivider />
        <Spacer />
        <StatusDivider />
        <ViewButtons>
          <ViewButton $on aria-label="Normalny"><NormalView /></ViewButton>
          <ViewButton aria-label="Układ strony"><PageView /></ViewButton>
          <ViewButton aria-label="Podgląd podziału stron"><BreakView /></ViewButton>
        </ViewButtons>
        <StatusText $w={46}>100%</StatusText>
        <IconButton aria-label="Pomniejsz"><ZoomGlyph /></IconButton>
        <ZoomRange type="range" aria-label="Powiększenie" min={0} max={100} defaultValue={50} />
        <IconButton aria-label="Powiększ"><ZoomGlyph plus /></IconButton>
      </StatusBar>
    </Window>
  );
}
